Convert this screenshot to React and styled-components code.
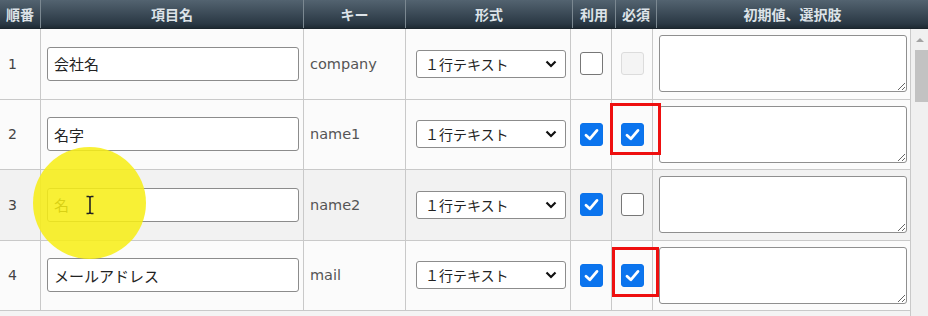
import React from 'react';
import styled, { createGlobalStyle } from 'styled-components';

const GlobalStyle = createGlobalStyle`
  body {
    margin: 0;
    background: #fff;
    font-family: "DejaVu Sans", "Noto Sans CJK JP", sans-serif;
  }
`;

const rows = [
  { no: 1, label: '会社名', key: 'company', use: false, req: false, reqDisabled: true },
  { no: 2, label: '名字', key: 'name1', use: true, req: true },
  { no: 3, label: '名', key: 'name2', use: true, req: false },
  { no: 4, label: 'メールアドレス', key: 'mail', use: true, req: true }
];

const Frame = styled.div`
  position: relative;
  width: 928px;
  height: 316px;
  overflow: hidden;
  background: #f4f4f4;
`;

const Header = styled.div`
  display: grid;
  grid-template-columns: 41px 263px 102px 167px 43px 41px 1fr;
  height: 29px;
  background: linear-gradient(#536370, #2a3844 85%, #1e2a33);
  border-bottom: 1px solid #1b252d;
  box-sizing: border-box;
`;

const HeadCell = styled.div`
  display: flex;
  align-items: center;
  justify-content: center;
  color: #dde3e8;
  font-family: "Noto Sans CJK JP", sans-serif;
  font-weight: 700;
  font-size: 14px;
  border-right: 1px solid #7b8891;
  &:last-child {
    border-right: none;
  }
`;

const Body = styled.div`
  display: flex;
`;

const Rows = styled.div`
  width: 911px;
  border-right: 1px solid #c9c9c9;
`;

const Row = styled.div`
  display: grid;
  grid-template-columns: 41px 263px 102px 165px 41px 41px 1fr;
  height: 70.5px;
  box-sizing: border-box;
  border-bottom: 1px solid #c9c9c9;
  background: ${(p) => (p.$alt ? '#f2f2f2' : '#fbfbfb')};
`;

const Cell = styled.div`
  position: relative;
  display: flex;
  align-items: center;
  justify-content: ${(p) => (p.$center ? 'center' : 'flex-start')};
  padding-left: ${(p) => p.$pad || 0}px;
  border-right: 1px solid #c9c9c9;
  box-sizing: border-box;
  &:last-child {
    border-right: none;
  }
`;

const Num = styled.span`
  font-size: 14px;
  color: #444;
  padding-left: 8px;
`;

const KeyText = styled.span`
  font-size: 14.5px;
  color: #555;
`;

const TextInput = styled.input`
  flex-shrink: 0;
  width: 252px;
  height: 34px;
  box-sizing: border-box;
  border: 1px solid #8c8c8c;
  border-radius: 3px;
  background: #fff;
  padding: 0 6px;
  font-family: "Noto Sans CJK JP", sans-serif;
  font-size: 15px;
  color: #222;
  outline: none;
`;

const SelectWrap = styled.div`
  position: relative;
  flex-shrink: 0;
  width: 150px;
  height: 28px;
`;

const Select = styled.select`
  appearance: none;
  width: 100%;
  height: 100%;
  box-sizing: border-box;
  border: 1px solid #8c8c8c;
  border-radius: 3px;
  background: #fff;
  padding: 0 0 0 8px;
  font-family: "Noto Sans CJK JP", sans-serif;
  font-size: 14px;
  color: #222;
`;

const Chevron = styled.svg`
  position: absolute;
  right: 9px;
  top: 10px;
  pointer-events: none;
`;

const Box = styled.span`
  display: inline-flex;
  align-items: center;
  justify-content: center;
  width: 23px;
  height: 23px;
  box-sizing: border-box;
  border-radius: 3px;
  border: 1px solid ${(p) => (p.$checked ? '#0a72ea' : p.$disabled ? '#dcdcdc' : '#777')};
  background: ${(p) => (p.$checked ? '#0b74ee' : p.$disabled ? '#f4f4f4' : '#fff')};
`;

const TextArea = styled.textarea`
  flex-shrink: 0;
  width: 248px;
  height: 57px;
  box-sizing: border-box;
  border: 1px solid #8f8f8f;
  border-radius: 3px;
  background: #fff;
  resize: both;
  font-size: 14px;
`;

const Scrollbar = styled.div`
  width: 17px;
  height: 287px;
  background: #f0f0f0;
  display: flex;
  flex-direction: column;
  align-items: center;
`;

const ArrowUp = styled.div`
  margin-top: 9px;
  width: 0;
  height: 0;
  border-left: 4px solid transparent;
  border-right: 4px solid transparent;
  border-bottom: 4px solid #a3a3a3;
`;

const Thumb = styled.div`
  margin-top: 8px;
  margin-left: 4px;
  width: 13px;
  height: 52px;
  background: #c2c2c2;
`;

const Marker = styled.div`
  position: absolute;
  left: ${(p) => p.$x}px;
  top: ${(p) => p.$y}px;
  width: ${(p) => p.$w}px;
  height: ${(p) => p.$h}px;
  box-sizing: border-box;
  border: 3px solid #ee0f0f;
  pointer-events: none;
`;

const Spot = styled.div`
  position: absolute;
  left: 33px;
  top: 147px;
  width: 113px;
  height: 112px;
  border-radius: 50%;
  background: rgba(247, 238, 20, 0.86);
  pointer-events: none;
`;

const IBeam = styled.svg`
  position: absolute;
  left: 85px;
  top: 195px;
  pointer-events: none;
`;

function Check({ checked, disabled }) {
  return (
    <Box $checked={checked} $disabled={disabled}>
      {checked && (
        <svg width="15" height="13" viewBox="0 0 15 13">
          <path
            d="M2 7.2 L5.8 10.8 L13 2.4"
            fill="none"
            stroke="#fff"
            strokeWidth="2.8"
            strokeLinecap="round"
            strokeLinejoin="round"
          />
        </svg>
      )}
    </Box>
  );
}

export default function App() {
  return (
    <Frame>
      <GlobalStyle />
      <Header>
        <HeadCell>順番</HeadCell>
        <HeadCell>項目名</HeadCell>
        <HeadCell>キー</HeadCell>
        <HeadCell>形式</HeadCell>
        <HeadCell>利用</HeadCell>
        <HeadCell>必須</HeadCell>
        <HeadCell>初期値、選択肢</HeadCell>
      </Header>
      <Body>
        <Rows>
          {rows.map((r, i) => (
            <Row key={r.no} $alt={i === 2}>
              <Cell>
                <Num>{r.no}</Num>
              </Cell>
              <Cell $pad={6}>
                <TextInput defaultValue={r.label} />
              </Cell>
              <Cell $pad={6}>
                <KeyText>{r.key}</KeyText>
              </Cell>
              <Cell $pad={10}>
                <SelectWrap>
                  <Select defaultValue="text">
                    <option value="text">１行テキスト</option>
                  </Select>
                  <Chevron width="12" height="8" viewBox="0 0 12 8">
                    <path d="M1.5 1.5 L6 6 L10.5 1.5" fill="none" stroke="#111" strokeWidth="2.2" />
                  </Chevron>
                </SelectWrap>
              </Cell>
              <Cell $center>
                <Check checked={r.use} />
              </Cell>
              <Cell $center>
                <Check checked={r.req} disabled={r.reqDisabled} />
              </Cell>
              <Cell $pad={6}>
                <TextArea />
              </Cell>
            </Row>
          ))}
        </Rows>
        <Scrollbar>
          <ArrowUp />
          <Thumb />
        </Scrollbar>
      </Body>
      <Marker $x={610} $y={103} $w={51} $h={52} />
      <Marker $x={612} $y={247} $w={47} $h={50} />
      <Spot />
      <IBeam width="10" height="20" viewBox="0 0 10 20">
        <path d="M1.5 1.5 H3.5 Q5 1.5 5 3 V17 Q5 18.5 3.5 18.5 H1.5 M8.5 1.5 H6.5 Q5 1.5 5 3 M5 17 Q5 18.5 6.5 18.5 H8.5" fill="none" stroke="#222" strokeWidth="1.6" />
      </IBeam>
    </Frame>
  );
}
